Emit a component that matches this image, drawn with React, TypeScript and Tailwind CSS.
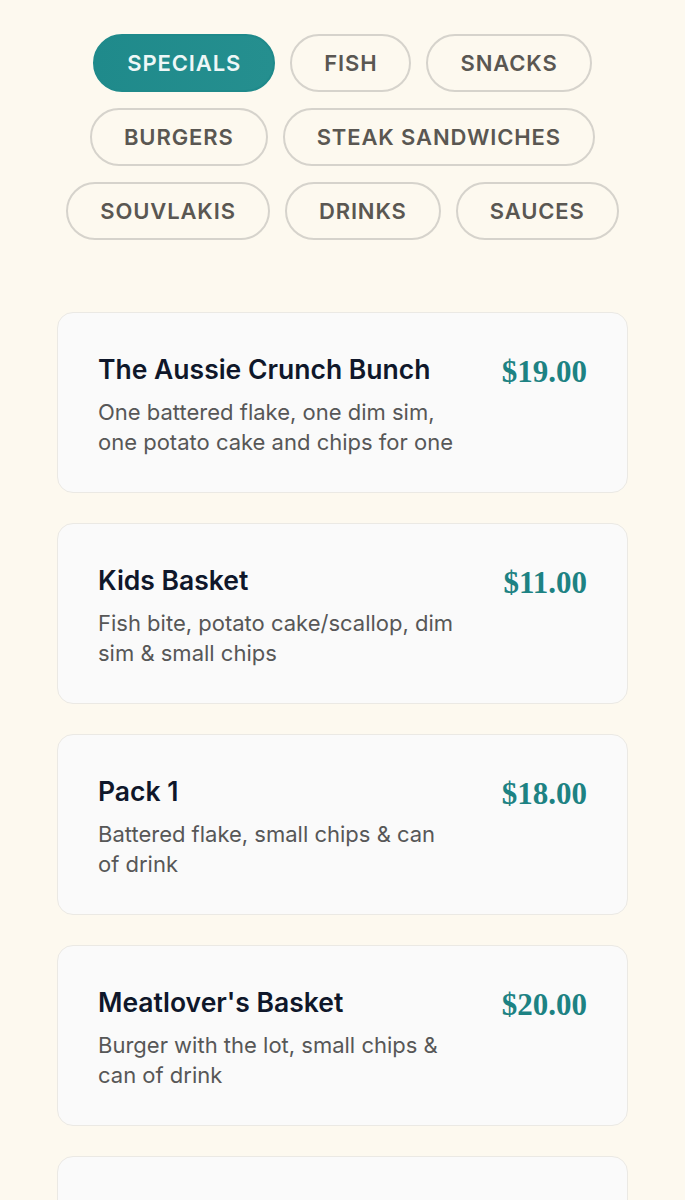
import React, { useState } from 'react';

const categories = [
  'Specials',
  'Fish',
  'Snacks',
  'Burgers',
  'Steak Sandwiches',
  'Souvlakis',
  'Drinks',
  'Sauces',
];

type MenuItem = { name: string; description: string; price: string };

const specials: MenuItem[] = [
  {
    name: 'The Aussie Crunch Bunch',
    description: 'One battered flake, one dim sim, one potato cake and chips for one',
    price: '$19.00',
  },
  {
    name: 'Kids Basket',
    description: 'Fish bite, potato cake/scallop, dim sim & small chips',
    price: '$11.00',
  },
  {
    name: 'Pack 1',
    description: 'Battered flake, small chips & can of drink',
    price: '$18.00',
  },
  {
    name: "Meatlover's Basket",
    description: 'Burger with the lot, small chips & can of drink',
    price: '$20.00',
  },
  {
    name: 'Family Feast',
    description: 'Four battered flakes, four potato cakes & large chips',
    price: '$45.00',
  },
];

const MenuCard: React.FC<{ item: MenuItem }> = ({ item }) => (
  <div className="flex justify-between gap-10 rounded-2xl border border-[#ebe9e4] bg-[#fafafa] px-10 pt-10 pb-[35px]">
    <div className="flex-1">
      <h3 className="text-[26.5px] leading-8 font-semibold text-[#0f172a]">{item.name}</h3>
      <p className="mt-[12px] text-[22px] leading-[30px] text-[#575757]">{item.description}</p>
    </div>
    <div
      className="shrink-0 pt-[3px] text-[31px] leading-8 font-bold text-[#1d8283]"
      style={{ fontFamily: '"Liberation Serif", "DejaVu Serif", serif' }}
    >
      {item.price}
    </div>
  </div>
);

export default function App() {
  const [active, setActive] = useState('Specials');

  return (
    <div
      className="min-h-screen bg-[#fdf9ef] px-[57px] pt-[34px] pb-10"
      style={{ fontFamily: 'Inter, "Noto Sans", sans-serif' }}
    >
      {/* Category pills */}
      <div className="flex flex-wrap justify-center gap-x-[15px] gap-y-[16px]">
        {categories.map((c) => {
          const on = c === active;
          return (
            <button
              key={c}
              onClick={() => setActive(c)}
              className={
                on
                  ? 'h-[58px] rounded-full border-2 border-[#1f8a8b] bg-gradient-to-r from-[#1f8a8b] to-[#258f8f] px-8 text-[22px] font-semibold uppercase tracking-[0.04em] text-[#eef7f7]'
                  : 'h-[58px] rounded-full border-2 border-[#d6d3cc] bg-transparent px-8 text-[22px] font-semibold uppercase tracking-[0.04em] text-[#5a5752]'
              }
            >
              {c}
            </button>
          );
        })}
      </div>

      {/* Menu items */}
      <div className="mt-[72px] flex flex-col gap-[30px]">
        {specials.map((item) => (
          <MenuCard key={item.name} item={item} />
        ))}
      </div>
    </div>
  );
}
